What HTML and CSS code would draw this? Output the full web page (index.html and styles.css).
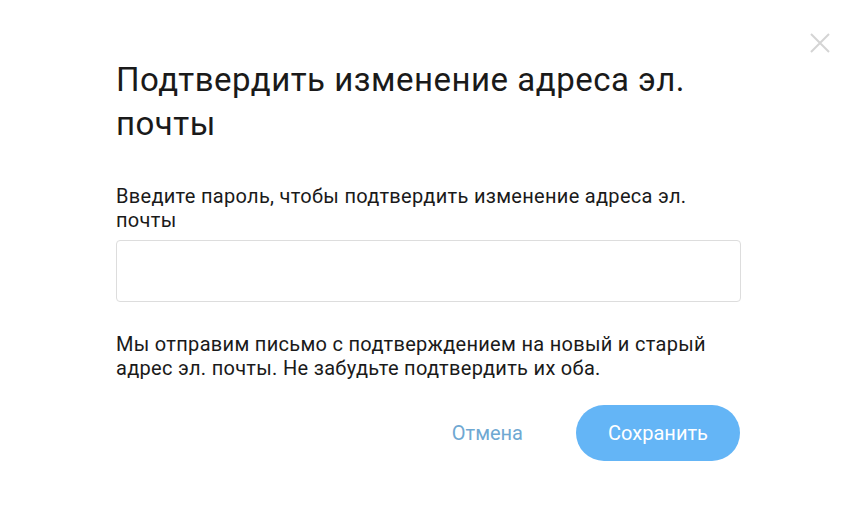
FILE: index.html
```html
<!DOCTYPE html>
<html lang="ru">
<head>
  <meta charset="UTF-8">
  <meta name="viewport" content="width=device-width, initial-scale=1.0">
  <title>Подтвердить изменение адреса эл. почты</title>
  <link rel="stylesheet" href="styles.css">
</head>
<body>
  <div class="modal">
    <button class="modal-close" aria-label="Закрыть">
      <svg width="22" height="22" viewBox="0 0 22 22">
        <path d="M2 2 L20 20 M20 2 L2 20" stroke="#d4d4d4" stroke-width="2" fill="none"/>
      </svg>
    </button>
    <div class="modal-body">
      <h1 class="modal-title">Подтвердить изменение адреса эл. почты</h1>
      <label class="field-label" for="password">Введите пароль, чтобы подтвердить изменение адреса эл. почты</label>
      <input class="field-input" id="password" type="password">
      <p class="modal-note">Мы отправим письмо с подтверждением на новый и старый адрес эл. почты. Не забудьте подтвердить их оба.</p>
      <div class="modal-actions">
        <button class="btn-cancel">Отмена</button>
        <button class="btn-save">Сохранить</button>
      </div>
    </div>
  </div>
</body>
</html>
```

FILE: styles.css
```css
body {
  margin: 0;
  background: #ffffff;
  font-family: Roboto, "Liberation Sans", sans-serif;
  color: #1a1a1a;
}

.modal {
  position: relative;
  width: 860px;
  height: 518px;
}

.modal-close {
  position: absolute;
  top: 32px;
  right: 29px;
  border: none;
  background: none;
  padding: 0;
  cursor: pointer;
}

.modal-body {
  width: 624px;
  padding: 58px 0 0 116px;
}

.modal-title {
  font-size: 33px;
  font-weight: 400;
  line-height: 44px;
  letter-spacing: 0.5px;
  margin: 0 0 38px;
}

.field-label {
  display: block;
  font-size: 20px;
  line-height: 24px;
  letter-spacing: 0.3px;
}

.field-input {
  display: block;
  box-sizing: border-box;
  width: 625px;
  height: 62px;
  margin-top: 8px;
  border: 1px solid #dddddd;
  border-radius: 4px;
}

.modal-note {
  font-size: 20px;
  line-height: 24px;
  letter-spacing: 0.3px;
  margin: 30px 0 0;
}

.modal-actions {
  display: flex;
  justify-content: flex-end;
  align-items: center;
  gap: 53px;
  margin-top: 25px;
}

.btn-cancel {
  border: none;
  background: none;
  font-family: inherit;
  font-size: 20px;
  color: #6fa8d2;
  padding: 0;
}

.btn-save {
  width: 164px;
  height: 56px;
  border: none;
  border-radius: 28px;
  background: #64b5f6;
  color: #ffffff;
  font-family: inherit;
  font-size: 20px;
}
```
